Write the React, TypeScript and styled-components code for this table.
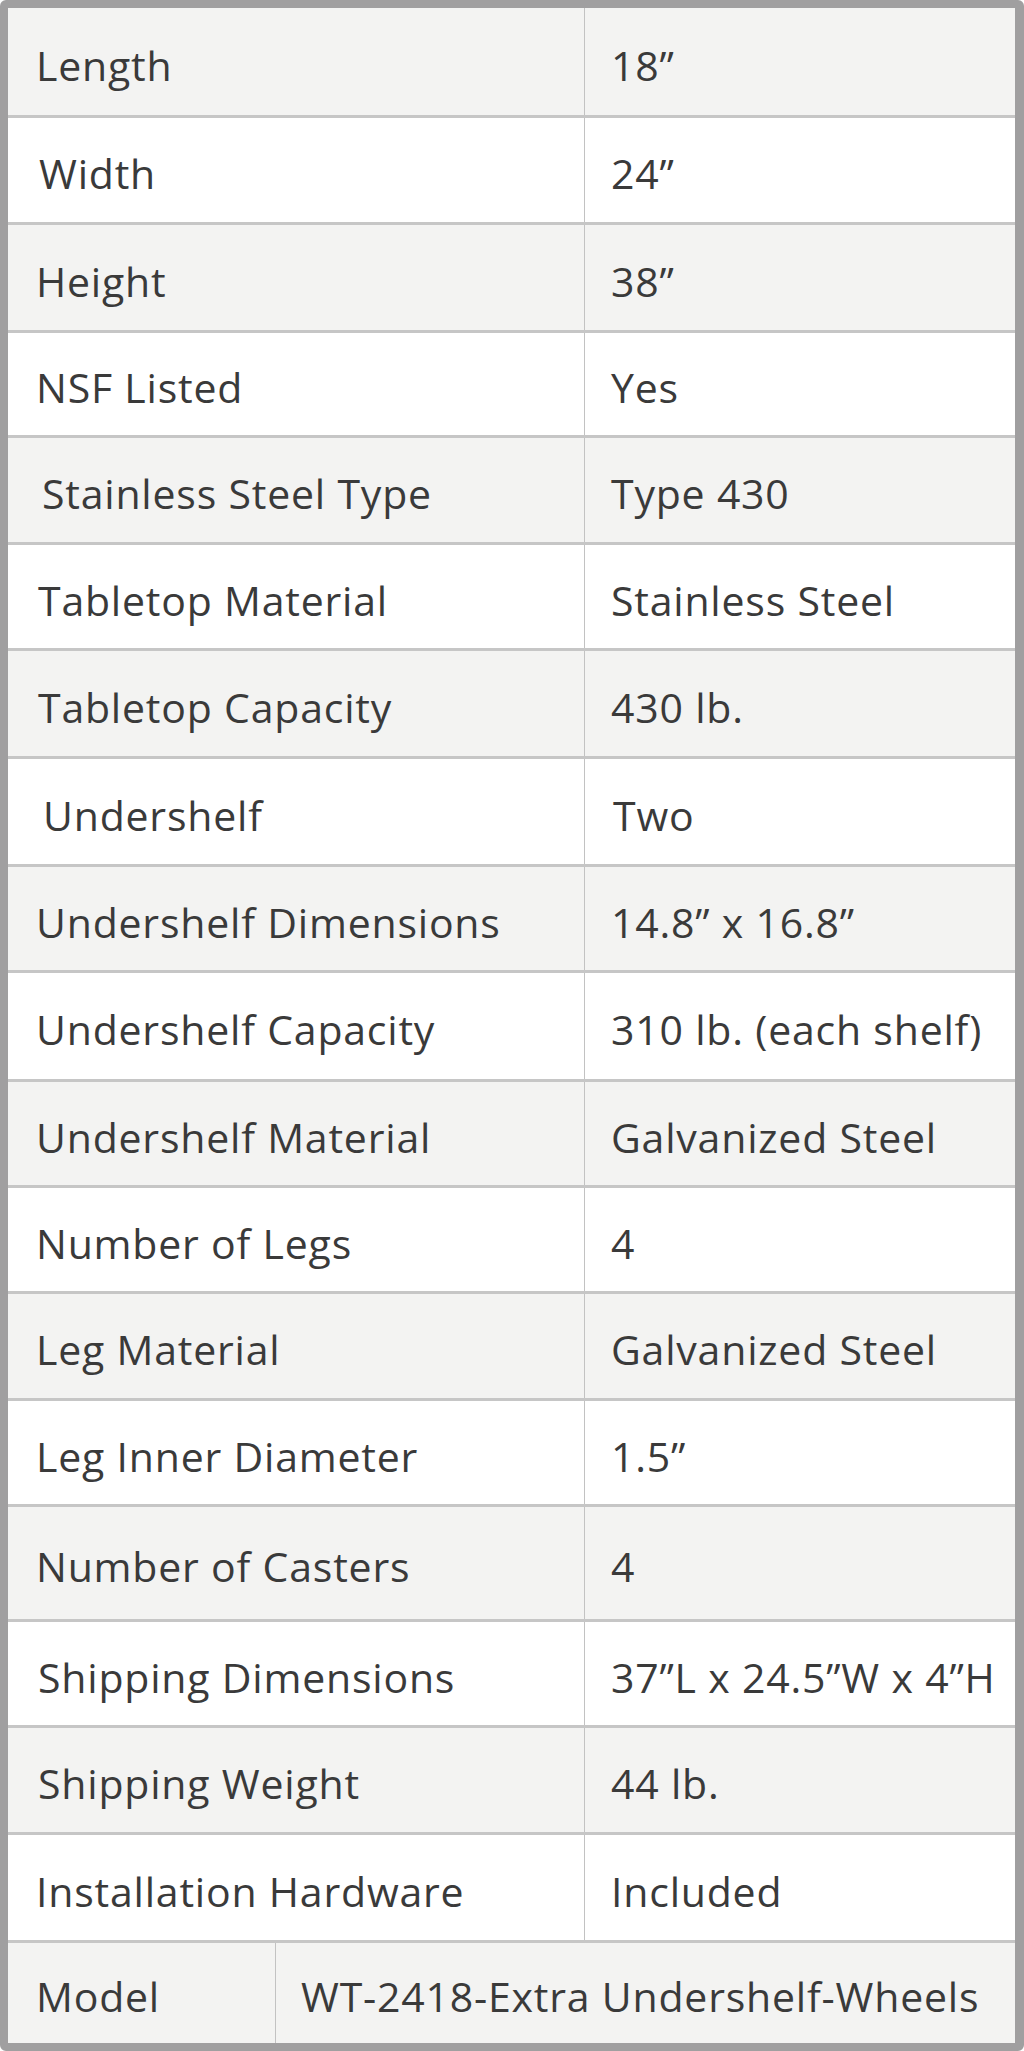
import styled, { createGlobalStyle } from "styled-components";

const Global = createGlobalStyle`
  html, body {
    margin: 0;
    padding: 0;
    background: #ffffff;
  }
`;

const Frame = styled.div`
  width: 1024px;
  height: 2051px;
  box-sizing: border-box;
  border: 8px solid #a09fa0;
  border-right-width: 9px;
  border-radius: 6px;
  display: flex;
  flex-direction: column;
  overflow: hidden;
  font-family: "Open Sans", "Noto Sans", sans-serif;
  color: #3a3a3a;
`;

const Row = styled.div<{ $h: number; $shade: boolean; $first: boolean; $labelW: number }>`
  height: ${p => p.$h}px;
  box-sizing: border-box;
  display: grid;
  grid-template-columns: ${p => p.$labelW}px 1fr;
  background: ${p => (p.$shade ? "#f3f3f2" : "#ffffff")};
  border-top: ${p => (p.$first ? "none" : "3px solid #c6c6c6")};
`;

const Cell = styled.div<{ $indent: number; $divider?: boolean }>`
  display: flex;
  align-items: center;
  padding: 6px 0 0 ${p => p.$indent}px;
  font-size: 41px;
  letter-spacing: 0.8px;
  white-space: nowrap;
  border-left: ${p => (p.$divider ? "1px solid #c2c2c2" : "none")};
`;

type Spec = { label: string; value: string; h: number; li?: number; vi?: number };

const specs: Spec[] = [
  { label: "Length", value: "18\u201d", h: 107 },
  { label: "Width", value: "24\u201d", h: 107, li: 31 },
  { label: "Height", value: "38\u201d", h: 108 },
  { label: "NSF Listed", value: "Yes", h: 105 },
  { label: "Stainless Steel Type", value: "Type 430", h: 107, li: 34 },
  { label: "Tabletop Material", value: "Stainless Steel", h: 106, li: 30 },
  { label: "Tabletop Capacity", value: "430 lb.", h: 108, li: 30 },
  { label: "Undershelf", value: "Two", h: 108, li: 35, vi: 28 },
  { label: "Undershelf Dimensions", value: "14.8\u201d x 16.8\u201d", h: 106 },
  { label: "Undershelf Capacity", value: "310 lb. (each shelf)", h: 109 },
  { label: "Undershelf Material", value: "Galvanized Steel", h: 106 },
  { label: "Number of Legs", value: "4", h: 106 },
  { label: "Leg Material", value: "Galvanized Steel", h: 107 },
  { label: "Leg Inner Diameter", value: "1.5\u201d", h: 106 },
  { label: "Number of Casters", value: "4", h: 115 },
  { label: "Shipping Dimensions", value: "37\u201dL x 24.5\u201dW x 4\u201dH", h: 106, li: 30 },
  { label: "Shipping Weight", value: "44 lb.", h: 107, li: 30 },
  { label: "Installation Hardware", value: "Included", h: 108 },
];

export default function App() {
  return (
    <>
      <Global />
      <Frame>
        {specs.map((s, i) => (
          <Row key={s.label} $h={s.h} $shade={i % 2 === 0} $first={i === 0} $labelW={576}>
            <Cell $indent={s.li ?? 28}>{s.label}</Cell>
            <Cell $indent={s.vi ?? 26} $divider>
              {s.value}
            </Cell>
          </Row>
        ))}
        <Row $h={103} $shade $first={false} $labelW={267}>
          <Cell $indent={28}>Model</Cell>
          <Cell $indent={25} $divider>
            WT-2418-Extra Undershelf-Wheels
          </Cell>
        </Row>
      </Frame>
    </>
  );
}
